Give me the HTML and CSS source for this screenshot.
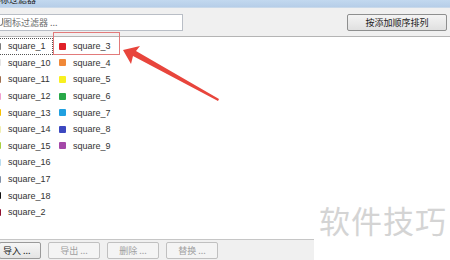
FILE: index.html
```html
<!DOCTYPE html>
<html>
<head>
	<title>图标过滤器</title>
	<meta charset="utf-8">
	<link rel="stylesheet" href="styles.css">
</head>
<body>
<div class="window">
	<div class="titlebar"><span class="title">标过滤器</span></div>

	<div class="toolbar">
		<div class="filter"><span class="lens"></span>图标过滤器 ...</div>
		<div class="sort-btn">按添加顺序排列</div>
	</div>

	<div class="list">
		<div class="col">
			<div class="item focus"><i style="background:#7a7a7a"></i>square_1</div>
			<div class="item"><i style="background:#e4e4e4"></i>square_10</div>
			<div class="item"><i style="background:#a07050"></i>square_11</div>
			<div class="item"><i style="background:#f0a0d0"></i>square_12</div>
			<div class="item"><i style="background:#f8c000"></i>square_13</div>
			<div class="item"><i style="background:#f0eeb0"></i>square_14</div>
			<div class="item"><i style="background:#a8d040"></i>square_15</div>
			<div class="item"><i style="background:#b8dcf0"></i>square_16</div>
			<div class="item"><i style="background:#8090a8"></i>square_17</div>
			<div class="item"><i style="background:#101010"></i>square_18</div>
			<div class="item"><i style="background:#901030"></i>square_2</div>
		</div>
		<div class="col">
			<div class="item"><i style="background:#e02028"></i>square_3</div>
			<div class="item"><i style="background:#f08838"></i>square_4</div>
			<div class="item"><i style="background:#f8f020"></i>square_5</div>
			<div class="item"><i style="background:#28a848"></i>square_6</div>
			<div class="item"><i style="background:#20a0e0"></i>square_7</div>
			<div class="item"><i style="background:#3c48c0"></i>square_8</div>
			<div class="item"><i style="background:#a448a8"></i>square_9</div>
		</div>
	</div>

	<div class="footer">
		<div class="btn">导入 ...</div>
		<div class="btn off">导出 ...</div>
		<div class="btn off">删除 ...</div>
		<div class="btn off">替换 ...</div>
	</div>

	<!-- annotation on top of the screenshot -->
	<div class="mark"></div>
	<svg class="arrow" width="104" height="64" viewBox="0 0 104 64">
		<polygon points="5,11 22,7 18,12 101,60 100,62 15,17 13,25" fill="#e8453c"/>
	</svg>
	<div class="watermark">软件技巧</div>
</div>
</body>
</html>
```

FILE: styles.css
```css
*{
	margin: 0;
	padding: 0;
	box-sizing: border-box;
}
body{
	font-family: "Liberation Sans", "Noto Sans CJK SC", sans-serif;
	background: #fff;
}
.window{
	width: 450px;
	height: 260px;
	position: relative;
	overflow: hidden;
	display: flex;
	flex-direction: column;
}
.titlebar{
	height: 8px;
	background: linear-gradient(#c2d8ef, #b6cee8);
	border-bottom: 1px solid #c9d9ea;
	overflow: hidden;
}
.title{
	display: block;
	font-family: "Noto Sans CJK SC", sans-serif;
	font-size: 9px;
	line-height: 9px;
	margin-top: -5px;
	color: #222;
}
.toolbar{
	height: 29px;
	background: #f0f0f0;
	display: flex;
	justify-content: space-between;
	align-items: center;
	padding: 0 3px 0 0;
	border-bottom: 1px solid #b4b4b4;
}
.filter{
	width: 184px;
	height: 17px;
	margin-left: -1px;
	background: #fff;
	border: 1px solid #b9bec6;
	font-family: "Noto Sans CJK SC", sans-serif;
	font-size: 9px;
	line-height: 15px;
	color: #6d6d6d;
	display: flex;
	align-items: center;
}
.lens{
	width: 4px;
	height: 8px;
	border-right: 1px solid #8a8a8a;
	border-bottom: 1px solid #8a8a8a;
	border-radius: 0 0 3px 0;
	margin-left: -1px;
}
.sort-btn{
	width: 100px;
	height: 17px;
	border: 1px solid #8e8f8f;
	border-radius: 2px;
	background: linear-gradient(#f4f4f4, #e0e0e0);
	font-family: "Noto Sans CJK SC", sans-serif;
	font-size: 9px;
	line-height: 15px;
	text-align: center;
	color: #222;
}
.list{
	flex: 1;
	display: grid;
	grid-template-columns: 65px 80px;
	margin-left: -8px;
	padding-top: 1px;
	background: #fff;
}
.item{
	height: 16.6px;
	display: flex;
	align-items: center;
	font-size: 9px;
	color: #333;
	padding-left: 2px;
}
.item i{
	width: 7px;
	height: 7px;
	margin-right: 7px;
	border-radius: 1px;
}
.focus{
	width: 61px;
	outline: 1px dotted #555;
	outline-offset: -1px;
}
.footer{
	height: 21px;
	border-top: 1px solid #c6c6c6;
	background: #f0f0f0;
	display: flex;
	align-items: center;
	gap: 7px;
	padding-top: 1px;
}
.btn{
	width: 52px;
	height: 17px;
	border: 1px solid #9a9a9a;
	border-radius: 2px;
	background: linear-gradient(#f6f6f6, #e4e4e4);
	font-family: "Noto Sans CJK SC", sans-serif;
	font-size: 9px;
	line-height: 15px;
	text-align: center;
	color: #222;
}
.btn:first-child{
	width: 42px;
	margin-left: -1px;
	text-align: left;
	padding-left: 3px;
}
.btn.off{
	color: #a0a0a0;
	border-color: #c0c0c0;
	background: #f4f4f4;
}
.mark{
	position: absolute;
	left: 53px;
	top: 32px;
	width: 67px;
	height: 23px;
	border: 1px solid #e27a7a;
}
.arrow{
	position: absolute;
	left: 118px;
	top: 39px;
}
.watermark{
	position: absolute;
	left: 314px;
	top: 190px;
	width: 140px;
	height: 72px;
	padding-left: 5px;
	background: #fff;
	font-family: "Noto Sans CJK SC", sans-serif;
	font-size: 31px;
	line-height: 60px;
	color: #d4d4d4;
	letter-spacing: 1px;
}
```
